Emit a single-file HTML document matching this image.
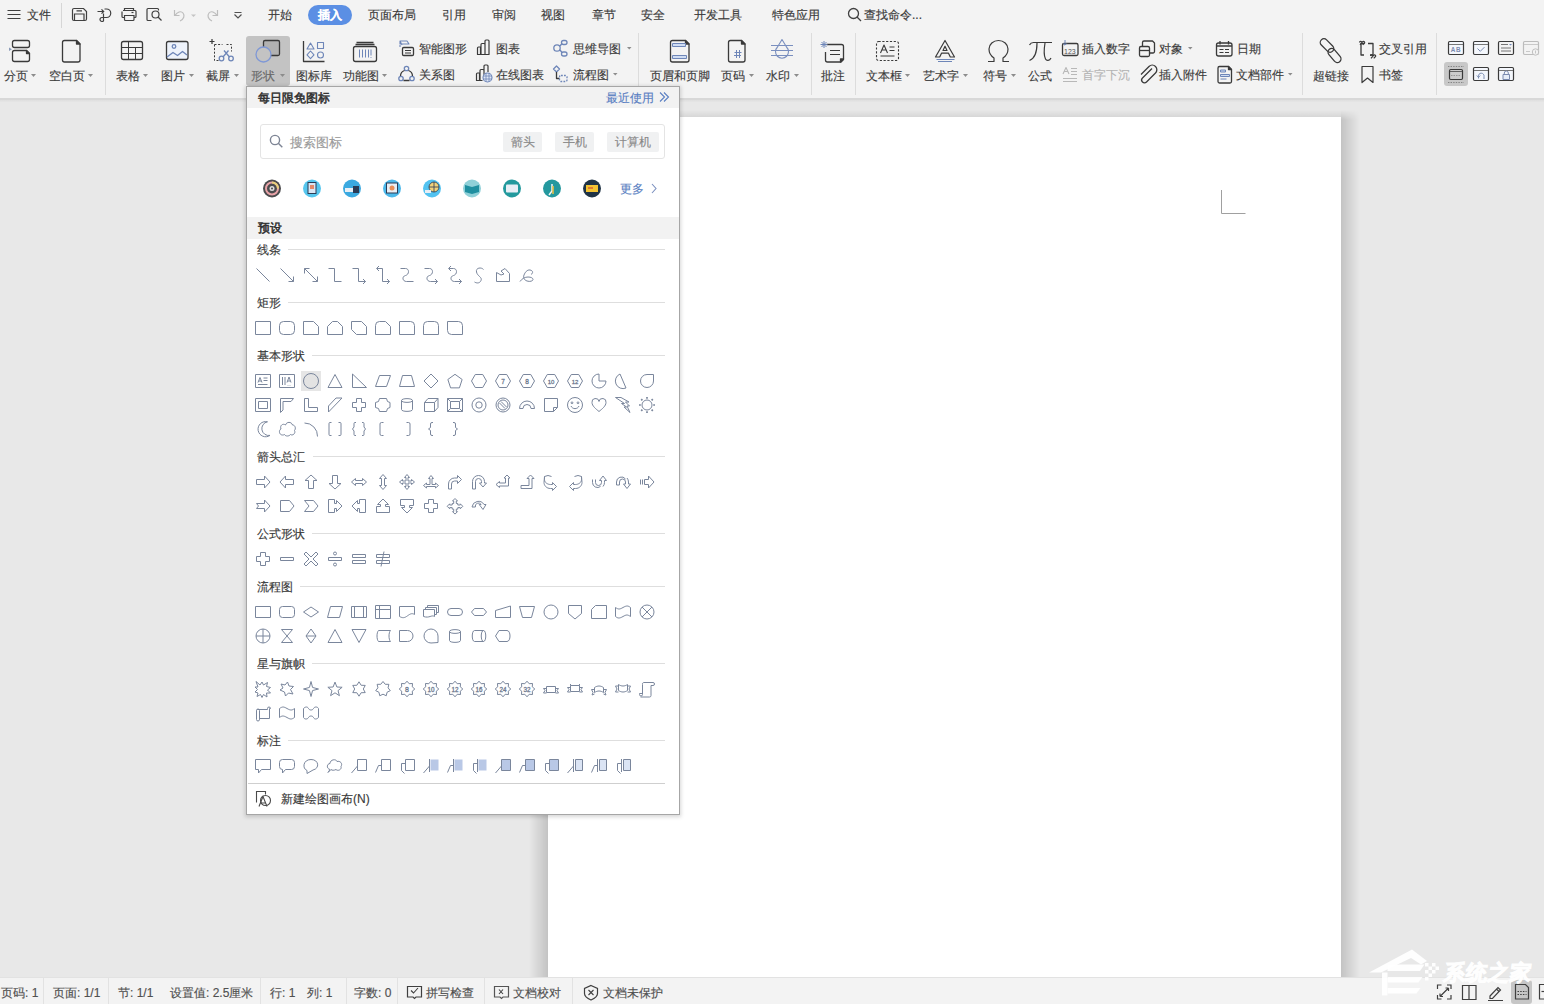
<!DOCTYPE html>
<html><head><meta charset="utf-8">
<style>
*{margin:0;padding:0;box-sizing:border-box}
html,body{width:1544px;height:1004px;overflow:hidden}
body{position:relative;background:#e8e8e8;font-family:"Liberation Sans",sans-serif;font-size:12px;color:#3c3c3c;-webkit-text-stroke:0.15px currentColor}
.a{position:absolute;white-space:nowrap;line-height:12px}
svg{position:absolute;overflow:visible}
#top{position:absolute;left:0;top:0;width:1544px;height:98px;background:#f3f3f3}
#topline{position:absolute;left:0;top:98px;width:1544px;height:2px;background:#d8d8d8}
.sep{position:absolute;width:1px;background:#dcdcdc}
.tab{position:absolute;top:9px;line-height:12px;font-size:12px;color:#3a3a3a;white-space:nowrap}
.lbl{position:absolute;top:70px;line-height:12px;color:#3c3c3c;white-space:nowrap}
.dd{position:absolute;width:0;height:0;border-left:2.5px solid transparent;border-right:2.5px solid transparent;border-top:3px solid #8a8a8a}
#page{position:absolute;left:548px;top:117px;width:793px;height:860px;background:#fff;}
#status{position:absolute;left:0;top:977px;width:1544px;height:27px;background:#f3f3f3;border-top:1px solid #e2e2e2}
.st{position:absolute;top:987px;line-height:12px;color:#505050;white-space:nowrap}
.ssep{position:absolute;top:978px;width:1px;height:26px;background:#e2e2e2}
#panel{position:absolute;left:246px;top:86px;width:434px;height:729px;background:#fff;border:1px solid #a6a6a6;box-shadow:0 1px 4px 1px rgba(0,0,0,0.16)}
.ph{position:absolute;line-height:12px;white-space:nowrap;color:#3a3a3a}
.hl{position:absolute;height:1px;background:#dedede}
</style></head><body>
<div id="top"></div>
<div id="topline"></div>
<!-- title/tab row -->
<svg style="left:0;top:0" width="260" height="32" fill="none" stroke="#404040" stroke-width="1.2">
<path d="M7.5 10.5h13M7.5 14.5h13M7.5 18.5h13"/>
<path d="M61.5 3v25" stroke="#d6d6d6" stroke-width="1"/>
<path d="M74 8.5h9.5l3 3v7.5a1.5 1.5 0 0 1 -1.5 1.5h-11a1.5 1.5 0 0 1 -1.5-1.5v-9a1.5 1.5 0 0 1 1.5-1.5z"/><path d="M74.5 20.5v-6.5h9.5v6.5M76.5 10.8h5.5"/>
<path d="M97.5 11.5h6M101.5 9.3l2.2 2.2-2.2 2.2M104.5 9h2a4.2 4.2 0 0 1 0 8.5h-4.5a2 2 0 1 0 1.5 3.3v-7.3"/>
<path d="M124.5 10.5v-2h9v2M123 10.5h12a1 1 0 0 1 1 1v5a1 1 0 0 1 -1 1h-1M124.5 17.5h-1.5a1 1 0 0 1 -1-1v-5M124.5 15.5h9.5v4a1 1 0 0 1 -1 1h-7.5a1 1 0 0 1 -1-1z"/><path d="M131.5 12.5h2"/>
<path d="M151.5 20.5h-3.5a1 1 0 0 1 -1-1v-10a1 1 0 0 1 1-1h9.5a1 1 0 0 1 1 1v1"/><circle cx="155.5" cy="14.5" r="3.5"/><path d="M158 17l3.5 3.5"/>
<path d="M174.5 10v5.5h5M175 15.5c2-3.5 6-5 8-2.5s1 6-3 8" stroke="#bdbdbd"/>
<path d="M191 14.5l2.5 2.5 2.5-2.5z" fill="#c4c4c4" stroke="none"/>
<path d="M217.5 10v5.5h-5M217 15.5c-2-3.5-6-5-8-2.5s-1 6 3 8" stroke="#bdbdbd"/>
<path d="M234.5 12.5h7M234.5 14.5l3.5 3.5 3.5-3.5" stroke="#505050"/>
</svg>
<div class="tab" style="left:27px">文件</div>
<div class="tab" style="left:268px">开始</div>
<div style="position:absolute;left:308px;top:5px;width:44px;height:20px;border-radius:10px;background:#5b8fe4"></div>
<div class="tab" style="left:318px;color:#fff;font-weight:bold">插入</div>
<div class="tab" style="left:368px">页面布局</div>
<div class="tab" style="left:442px">引用</div>
<div class="tab" style="left:492px">审阅</div>
<div class="tab" style="left:541px">视图</div>
<div class="tab" style="left:592px">章节</div>
<div class="tab" style="left:641px">安全</div>
<div class="tab" style="left:694px">开发工具</div>
<div class="tab" style="left:772px">特色应用</div>
<svg style="left:846px;top:6px" width="20" height="20" fill="none" stroke="#404040" stroke-width="1.3"><circle cx="7.5" cy="7.5" r="5"/><path d="M11 11l4 4"/></svg>
<div class="tab" style="left:864px">查找命令...</div>
<!-- ribbon -->
<div style="position:absolute;left:246px;top:36px;width:44px;height:50px;border-radius:3px;background:#c3c3c3"></div>
<div style="position:absolute;left:1444px;top:62px;width:24px;height:24px;border-radius:3px;background:#c8c8c8"></div>
<div class="sep" style="left:105px;top:33px;height:62px"></div>
<div class="sep" style="left:638px;top:33px;height:62px"></div>
<div class="sep" style="left:811px;top:33px;height:62px"></div>
<div class="sep" style="left:855px;top:33px;height:62px"></div>
<div class="sep" style="left:1302px;top:33px;height:62px"></div>
<div class="sep" style="left:1436px;top:33px;height:62px"></div>
<svg style="left:0;top:0" width="1544" height="98" fill="none" stroke="#3a3a3a" stroke-width="1.3" stroke-linejoin="round">
<!-- 分页 -->
<rect x="12.5" y="40.5" width="17" height="7" rx="2"/><path d="M14.5 50.5h12l3 3v6a2 2 0 0 1 -2 2h-13a2 2 0 0 1 -2-2v-7a2 2 0 0 1 2-2z"/><path d="M26.5 50.5l3 3h-3z" fill="#3a3a3a"/><path d="M9 47.5l3 1.8-3 1.8z" fill="#8a9ab8" stroke="none"/>
<!-- 空白页 -->
<path d="M64.5 40.5h12l3.5 3.5v16a2 2 0 0 1 -2 2h-13.5a2 2 0 0 1 -2-2v-17.5a2 2 0 0 1 2-2z"/><path d="M76.5 40.5l3.5 3.5h-3.5z" fill="#3a3a3a"/>
<!-- 表格 -->
<rect x="121.5" y="41.5" width="21" height="18" rx="2"/><path d="M121.5 47.5h21M121.5 53.5h21M128.5 41.5v18M135.5 47.5v12" stroke-width="1"/>
<!-- 图片 -->
<rect x="166.5" y="41.5" width="21.5" height="18" rx="2" fill="#eef3fb"/><circle cx="174" cy="46.5" r="1.8" stroke="#6e86b8"/><path d="M167 57l6-4.5 4.5 3 5-4 4.5 3.5" stroke="#6e86b8"/>
<!-- 截屏 -->
<path d="M214.5 44.5v16h4M226.5 44.5h5v7" stroke-dasharray="2 1.6" stroke-width="1"/><path d="M214.5 44.5h8" stroke-dasharray="2 1.6" stroke-width="1"/><path d="M209.5 41.5h5M212 39v5" stroke-width="1.2"/>
<circle cx="221.5" cy="58.5" r="2.3" stroke="#6e86b8"/><circle cx="231" cy="58.5" r="2.3" stroke="#6e86b8"/><path d="M223 57l5.5-6.5M229.5 57l-5.5-6.5" stroke="#6e86b8"/>
<!-- 形状 -->
<rect x="263.5" y="40.5" width="16" height="15" rx="1.5" fill="#b2b2b2"/><circle cx="263.5" cy="54.5" r="7.5" fill="#c3c3c3" stroke="#7f98d6" stroke-width="1.3"/>
<!-- 图标库 -->
<path d="M303.5 41v20.5h21" /><path d="M307 49l3.5-6 3.5 6z M317.5 42.5h6v6h-6z M310.5 51l3.5 3.8-3.5 3.8-3.5-3.8z" stroke="#6e86b8" stroke-width="1.1"/><circle cx="320.5" cy="55" r="3" stroke="#6e86b8" stroke-width="1.1"/>
<!-- 功能图 -->
<path d="M356.5 42.5h17M355.5 44.5h19"/><rect x="353.5" y="46.5" width="23" height="15" rx="2"/><path d="M359.5 49.5v8M362.5 49.5v8M365.5 49.5v8M368.5 49.5v8M371 49.5v6M371 57v0.8" stroke="#6e86b8" stroke-width="1"/>
<!-- 智能图形 -->
<path d="M400 41h7l2 3h-9zM400 41l2 4M400 47v-2" stroke="#6e86b8" stroke-width="1.1"/><rect x="402.5" y="47.5" width="11" height="8" rx="1.2"/><path d="M405 50.5h6M405 53h6" stroke-width="1"/>
<!-- 图表 -->
<path d="M477.5 54.5v-6.5a1 1 0 0 1 1-1h2v7.5zM481 54.5v-10a1 1 0 0 1 1-1h2a1 1 0 0 1 1 1v10zM485 54.5v-13.5a1 1 0 0 1 1-1h2a1 1 0 0 1 1 1v13.5z M477.5 54.5h11.5" stroke-width="1.2"/>
<!-- 思维导图 -->
<circle cx="557" cy="48" r="3.2" stroke="#6e86b8"/><rect x="561.5" y="40.5" width="5.5" height="4" rx="2" stroke="#6e86b8"/><rect x="561.5" y="52" width="5.5" height="4" rx="2" stroke="#6e86b8"/><path d="M560 46l2-2.5M560 50l2 2.5" stroke="#6e86b8"/>
<!-- 关系图 -->
<circle cx="406.5" cy="68.5" r="2.2" stroke="#6e86b8"/><circle cx="401" cy="78.5" r="2.2" stroke="#6e86b8"/><circle cx="412" cy="78.5" r="2.2" stroke="#6e86b8"/><path d="M404.5 70.5a6 6 0 0 0 -4 5.5M408.5 70.5a6 6 0 0 1 4 5.5M403.5 80.5h6" stroke="#3a3a3a"/>
<!-- 在线图表 -->
<path d="M476.5 80.5v-6.5a1 1 0 0 1 1-1h2v7.5zM480 80.5v-10a1 1 0 0 1 1-1h2a1 1 0 0 1 1 1v5M484 74.5v-8.5a1 1 0 0 1 1-1h2a1 1 0 0 1 1 1v6M476.5 80.5h6" stroke-width="1.2"/><circle cx="487.5" cy="77.5" r="4.5" fill="#dfe8f7" stroke="#6e86b8" stroke-width="1.1"/><path d="M483 76h9M483 79h9M486 73v9M489 73v9" stroke="#6e86b8" stroke-width="0.8"/>
<!-- 流程图 -->
<path d="M556.5 66l3 3-3 3-3-3z" stroke="#6e86b8"/><path d="M556.5 72v6.5h3" /><rect x="559.5" y="75.5" width="7.5" height="6" rx="1.5" stroke="#6e86b8" stroke-dasharray="1.8 1.2"/>
<!-- 页眉和页脚 -->
<path d="M672.5 40.5h13l3.5 3.5v16a2 2 0 0 1 -2 2h-14.5a2 2 0 0 1 -2-2v-17.5a2 2 0 0 1 2-2z"/><path d="M685.5 40.5l3.5 3.5h-3.5z" fill="#3a3a3a"/><rect x="672.5" y="43.5" width="13" height="3" fill="#cfdcf2" stroke="#6e86b8" stroke-width="1"/><rect x="672.5" y="55.5" width="14" height="3" fill="#cfdcf2" stroke="#6e86b8" stroke-width="1"/>
<!-- 页码 -->
<path d="M730.5 40.5h11l3.5 3.5v16a2 2 0 0 1 -2 2h-12.5a2 2 0 0 1 -2-2v-17.5a2 2 0 0 1 2-2z"/><path d="M741.5 40.5l3.5 3.5h-3.5z" fill="#3a3a3a"/><path d="M734.5 52.5h7M734 55.5h7M736.5 50v8M739.5 50v8" stroke="#6e86b8" stroke-width="1"/>
<!-- 水印 -->
<path d="M782 39.5l-4.5 7.5a6.5 6.5 0 1 0 9 0z" stroke="#7a8fbf" stroke-width="1.1"/><path d="M771 45.5h22M771 50.5h22M771 55.5h22" stroke="#7a8fbf" stroke-width="1.1"/>
<!-- 批注 -->
<path d="M826.5 44.5h15a2 2 0 0 1 2 2v13l-2.5 2.5h-13.5a2 2 0 0 1 -2-2v-8"/><path d="M840.5 62l3-3h-3z" fill="#3a3a3a"/><path d="M830 50.5h10M830 54.5h10" stroke-width="1"/><path d="M824 41v7M820.5 44.5h7M821.5 42l5 5M826.5 42l-5 5" stroke="#6e86b8" stroke-width="1"/>
<!-- 文本框 -->
<rect x="876.5" y="41.5" width="22" height="19" rx="2" stroke-dasharray="2.2 1.6" stroke-width="1.1"/><path d="M880.5 53l3.5-8 3.5 8M881.8 50h4.5M889.5 47h5M889.5 50.5h5M880.5 56h14" stroke-width="1.1"/>
<!-- 艺术字 -->
<path d="M945 40.5L935.5 57h4.2l1.8-3.8h7l1.8 3.8h4.2zM945 46.2l-2 4.3h4z" stroke-width="1.2"/><path d="M936.5 59.5h18M938 61.5h14" stroke="#6e86b8" stroke-width="1"/>
<!-- 符号 -->
<path d="M988 61.5h6v-3.5c-3-2-5-5-5-9a9.5 8.5 0 0 1 19 0c0 4-2 7-5 9v3.5h6" stroke-width="1.2"/>
<!-- 公式 -->
<path d="M1029.5 45c1-2 2-2.5 4-2.5h18.5M1037 43c0 8-1 15-7.5 17.5M1045 43c-1 6-1.5 12 0.5 16c1 2 4 2 5.5-1" stroke-width="1.2"/>
<!-- 插入数字 -->
<rect x="1062.5" y="43.5" width="15.5" height="12" rx="1.5"/><path d="M1065 40v5M1063.3 43.5l1.7 1.7 1.7-1.7" stroke="#6e86b8" stroke-width="1"/><text x="1064" y="53.5" font-size="7" fill="#555" stroke="none" font-family="Liberation Sans">123</text>
<!-- 对象 -->
<rect x="1139.5" y="46.5" width="10" height="10" rx="1.5"/><path d="M1142.5 46.5v-4a1.5 1.5 0 0 1 1.5-1.5h8.5l2 2v8.5a1.5 1.5 0 0 1 -1.5 1.5h-3.5"/><path d="M1139.5 50.5h10"/>
<!-- 日期 -->
<rect x="1216.5" y="43" width="15.5" height="13" rx="2"/><path d="M1220 41v3.5M1228.5 41v3.5M1216.5 46h15.5" /><path d="M1219.5 49.5h4M1225 49.5h4M1219.5 52.5h4M1225 52.5h4" stroke-width="1"/>
<!-- 首字下沉 -->
<path d="M1063 74l3-6.5 3 6.5M1064 71.5h4M1071 68.5h6M1071 71.5h6M1071 74.5h6M1063 78.5h14M1063 81.5h14" stroke="#b8b8b8" stroke-width="1.1"/>
<!-- 插入附件 -->
<path d="M1152 68.5l-9.5 9.5a2.8 2.8 0 0 0 4 4l9-9a4.5 4.5 0 0 0 -6.5-6.5l-8 8" stroke-width="1.3"/>
<!-- 文档部件 -->
<path d="M1219.5 66.5h9l3 3v12a1.5 1.5 0 0 1 -1.5 1.5h-10.5a1.5 1.5 0 0 1 -1.5-1.5v-13.5a1.5 1.5 0 0 1 1.5-1.5z"/><path d="M1228.5 66.5l3 3h-3z" fill="#3a3a3a"/><path d="M1220.5 70h5v2h-5zM1220.5 74.5h9v2h-9zM1220.5 79h6" stroke="#6e86b8" stroke-width="1" fill="#cfdcf2"/>
<!-- 超链接 -->
<rect x="1319" y="41.8" width="16" height="7.4" rx="3.7" transform="rotate(45 1327 45.5)" stroke-width="1.3"/><rect x="1326.5" y="51.8" width="16" height="7.4" rx="3.7" transform="rotate(50 1334.5 55.5)" stroke-width="1.3"/>
<!-- 交叉引用 -->
<path d="M1364.5 43.5h-3.5v11.5h3M1368 43.5h5v11.5h-3" stroke-width="1.3"/><path d="M1359.5 42.5a1.2 1.2 0 1 1 1.5 1.2l-1 1.2M1362.3 42.5a1.2 1.2 0 1 1 1.5 1.2l-1 1.2M1370.5 56a1.2 1.2 0 1 1 1.5 1.2l-1 1.2M1373.3 56a1.2 1.2 0 1 1 1.5 1.2l-1 1.2" stroke-width="1.2"/>
<!-- 书签 -->
<path d="M1362 66.5h11v16l-5.5-4.5-5.5 4.5z" stroke-width="1.2"/>
<!-- small icons right -->
<g stroke-width="1.2">
<rect x="1448.5" y="41.5" width="15" height="13" rx="1.2" fill="#f4f7fc"/><path d="M1449 44.5h14" stroke-width="0.9" stroke="#666"/><text x="1450.8" y="52.3" font-size="6.3" fill="#7a8bb0" stroke="none" font-family="Liberation Sans" font-weight="bold" letter-spacing="0.6">AB</text>
<rect x="1473.5" y="41.5" width="15" height="13" rx="1.2" fill="#f4f7fc"/><path d="M1474 44.5h14" stroke-width="0.9" stroke="#666"/><path d="M1477.5 48.5l2.8 2.8 4.2-4.2" stroke="#7a8bb0" stroke-width="1"/>
<rect x="1498.5" y="41.5" width="15" height="13" rx="1.2"/><path d="M1501 44.5h7M1501 48h10M1501 51h10" stroke-width="0.9" stroke="#666"/><path d="M1509 44l1.5 1.5 1.5-1.5z" fill="#6e86b8" stroke="none"/>
<rect x="1523.5" y="41.5" width="15" height="13" rx="1.2" stroke="#bcbcbc"/><path d="M1524 44.5h14M1526 51.5h4" stroke="#c4c4c4" stroke-width="0.9"/><circle cx="1535.5" cy="52" r="3.2" stroke="#c0c0c0" stroke-width="1" fill="#f3f3f3"/><path d="M1535.5 50.5v3" stroke="#c0c0c0" stroke-width="0.9"/>
<rect x="1449.5" y="69.5" width="13" height="10" rx="1.2" fill="#cbcbcb"/><path d="M1450 71.5h12" stroke-width="0.9" stroke="#555"/><path d="M1451 75.5h10" stroke-width="0.8" stroke="#888" stroke-dasharray="1.5 1"/><path d="M1448 66.5h16M1448 82.5h16" stroke="#7d7d7d" stroke-width="0.9" stroke-dasharray="1.4 1.2"/>
<rect x="1473.5" y="67.5" width="15" height="13" rx="1.2" fill="#f4f7fc"/><path d="M1474 70.5h14" stroke-width="0.9" stroke="#666"/><path d="M1478.5 78.5v-2a2.8 2.8 0 1 1 5.5 0v2.5M1476.8 75.5l1.7 1.8 1.7-1.8" stroke="#7a8bb0" stroke-width="1"/>
<rect x="1498.5" y="67.5" width="15" height="13" rx="1.2" fill="#f4f7fc"/><path d="M1499 70.5h14" stroke-width="0.9" stroke="#666"/><rect x="1503" y="74.5" width="6.5" height="5" stroke="#7a8bb0" stroke-width="1" fill="#e6edf8"/><path d="M1504.3 74.5v-1.5a2 2 0 0 1 4 0v1.5" stroke="#7a8bb0" stroke-width="1"/>
</g>
<!-- dropdown arrows -->
<g fill="#8c8c8c" stroke="none">
<path d="M31 74h5l-2.5 3z"/><path d="M88 74h5l-2.5 3z"/><path d="M143 74h5l-2.5 3z"/><path d="M189 74h5l-2.5 3z"/><path d="M234 74h5l-2.5 3z"/><path d="M280 74h5l-2.5 3z"/><path d="M382 74h5l-2.5 3z"/>
<path d="M627 47h4.5l-2.25 2.5z"/><path d="M613 73h4.5l-2.25 2.5z"/>
<path d="M749 74h5l-2.5 3z"/><path d="M794 74h5l-2.5 3z"/>
<path d="M905 74h5l-2.5 3z"/><path d="M963 74h5l-2.5 3z"/><path d="M1011 74h5l-2.5 3z"/>
<path d="M1188 47h4.5l-2.25 2.5z"/><path d="M1288 73h4.5l-2.25 2.5z"/>
</g>
</svg>
<div class="lbl" style="left:4px">分页</div>
<div class="lbl" style="left:49px">空白页</div>
<div class="lbl" style="left:116px">表格</div>
<div class="lbl" style="left:161px">图片</div>
<div class="lbl" style="left:206px">截屏</div>
<div class="lbl" style="left:251px;color:#6a6a6a">形状</div>
<div class="lbl" style="left:296px">图标库</div>
<div class="lbl" style="left:343px">功能图</div>
<div class="lbl" style="left:419px;top:43px">智能图形</div>
<div class="lbl" style="left:496px;top:43px">图表</div>
<div class="lbl" style="left:573px;top:43px">思维导图</div>
<div class="lbl" style="left:419px;top:69px">关系图</div>
<div class="lbl" style="left:496px;top:69px">在线图表</div>
<div class="lbl" style="left:573px;top:69px">流程图</div>
<div class="lbl" style="left:650px">页眉和页脚</div>
<div class="lbl" style="left:721px">页码</div>
<div class="lbl" style="left:766px">水印</div>
<div class="lbl" style="left:821px">批注</div>
<div class="lbl" style="left:866px">文本框</div>
<div class="lbl" style="left:923px">艺术字</div>
<div class="lbl" style="left:983px">符号</div>
<div class="lbl" style="left:1028px">公式</div>
<div class="lbl" style="left:1082px;top:43px">插入数字</div>
<div class="lbl" style="left:1159px;top:43px">对象</div>
<div class="lbl" style="left:1237px;top:43px">日期</div>
<div class="lbl" style="left:1082px;top:69px;color:#b4b4b4">首字下沉</div>
<div class="lbl" style="left:1159px;top:69px">插入附件</div>
<div class="lbl" style="left:1236px;top:69px">文档部件</div>
<div class="lbl" style="left:1313px">超链接</div>
<div class="lbl" style="left:1379px;top:43px">交叉引用</div>
<div class="lbl" style="left:1379px;top:69px">书签</div>

<div style="position:absolute;left:0;top:100px;width:1544px;height:2px;background:linear-gradient(#dfdfdf,#e6e6e6)"></div>
<div style="position:absolute;left:529px;top:110px;width:19px;height:867px;background:linear-gradient(to right,rgba(0,0,0,0),rgba(0,0,0,0.155));-webkit-mask-image:linear-gradient(transparent,#000 10px);mask-image:linear-gradient(transparent,#000 10px)"></div>
<div style="position:absolute;left:1341px;top:110px;width:19px;height:867px;background:linear-gradient(to left,rgba(0,0,0,0),rgba(0,0,0,0.155));-webkit-mask-image:linear-gradient(transparent,#000 10px);mask-image:linear-gradient(transparent,#000 10px)"></div>
<div style="position:absolute;left:548px;top:110px;width:793px;height:7px;background:linear-gradient(rgba(0,0,0,0),rgba(0,0,0,0.075))"></div>
<div id="page"></div>
<svg style="left:1220px;top:190px" width="30" height="30" fill="none" stroke="#a0a0a0" stroke-width="1"><path d="M1.5 0v23.5h24"/></svg>
<div id="status"></div>
<div class="ssep" style="left:43px"></div>
<div class="ssep" style="left:108px"></div>
<div class="ssep" style="left:260px"></div>
<div class="ssep" style="left:346px"></div>
<div class="ssep" style="left:397px"></div>
<div class="ssep" style="left:484px"></div>
<div class="ssep" style="left:572px"></div>
<div class="st" style="left:1px">页码: 1</div>
<div class="st" style="left:53px">页面: 1/1</div>
<div class="st" style="left:118px">节: 1/1</div>
<div class="st" style="left:170px">设置值: 2.5厘米</div>
<div class="st" style="left:270px">行: 1</div>
<div class="st" style="left:307px">列: 1</div>
<div class="st" style="left:354px">字数: 0</div>
<div class="st" style="left:426px">拼写检查</div>
<div class="st" style="left:513px">文档校对</div>
<div class="st" style="left:603px">文档未保护</div>
<div style="position:absolute;left:1511px;top:980px;width:21px;height:24px;border-radius:3px;background:#c6c6c6"></div>
<svg style="left:0;top:970px" width="1544" height="34" fill="none" stroke="#3f3f3f" stroke-width="1.2">
<path d="M407.5 16.5h14v10.5h-5.5l-1.5 1.5-1.5-1.5h-5.5z"/><path d="M411 20.5l2.5 2.5 4.5-5" stroke-width="1.1"/>
<path d="M494.5 16.5h14v10.5h-5.5l-1.5 1.5-1.5-1.5h-5.5z" stroke="#555"/><path d="M499 19.5l4 4.5M503 19.5l-4 4.5" stroke-width="1.1"/>
<path d="M591 15.5l6.5 3v5c0 3-3 5-6.5 6.5-3.5-1.5-6.5-3.5-6.5-6.5v-5z"/><path d="M588.5 20l5 5M593.5 20l-5 5" stroke-width="1.1"/>
<path d="M1437.5 19v-4h4M1451 19v-4h-4M1437.5 25v4h4M1451 25v4h-4M1440 26.5l8.5-8.5M1440 26.5h3M1440 26.5v-3M1448.5 18h-3M1448.5 18v3"/>
<path d="M1462.5 15.5h6.5v14h-6.5zM1469 15.5h7v14h-7z"/>
<path d="M1490 26l8-8.5 2.5 2.5-8 8.5h-2.5zM1496.5 19l2.5 2.5M1488 30.5h15"/>
<path d="M1515.5 14.5h10l3 3v11.5h-13z"/><path d="M1517.5 21.5h9M1517.5 24.5h9" stroke-dasharray="1.5 1.2" stroke-width="1"/>
<path d="M1539.5 14.5h10v14.5h-10z"/><path d="M1541.5 21.5h3"/>
</svg>
<!-- watermark -->
<svg style="left:1365px;top:945px" width="180" height="55">
<g fill="#fff" fill-opacity="0.93">
<path d="M4 27.5L47 4.5L62 16L56 19.5L46 13L16 27.5z"/>
<path d="M17 27.5h5.5v23h-5.5z"/>
<path d="M22.5 19.5h37l-4.5 6.5h-32.5z"/>
<path d="M22.5 32h35l-4 5.5h-31z"/>
<path d="M22.5 43h33l-4 5.5h-29z"/>
<path d="M60 18h3.5v3.5h-3.5zM63.5 21.5h3.5v3.5h-3.5zM67 18h3.5v3.5h-3.5zM60 25h3.5v3.5h-3.5zM67 25h3.5v3.5h-3.5zM63.5 28.5h3.5v3.5h-3.5zM60 32h3.5v3.5h-3.5zM70.5 21.5h3.5v3.5h-3.5z"/>
</g>
<text x="78" y="35.5" font-size="21.5" font-weight="bold" fill="#fff" fill-opacity="0.93" font-family="Liberation Sans" stroke="#fff" stroke-opacity="0.9" stroke-width="0.9" transform="skewX(-8) translate(5,0)">系统之家</text>
</svg>

<div id="panel"></div>
<div style="position:absolute;left:247px;top:87px;width:432px;height:21px;background:#f2f2f2"></div>
<div class="ph" style="left:258px;top:92px;-webkit-text-stroke:0.5px #2e2e2e;color:#2e2e2e">每日限免图标</div>
<div class="ph" style="left:606px;top:92px;color:#5a7fc2">最近使用</div>
<svg style="left:658px;top:91px" width="14" height="14" fill="none" stroke="#5a7fc2" stroke-width="1.1"><path d="M2 1.5l4.5 4.5-4.5 4.5M6 1.5l4.5 4.5-4.5 4.5"/></svg>
<div style="position:absolute;left:260px;top:124px;width:405px;height:35px;border:1px solid #e4e4e4;border-radius:3px;background:#fff"></div>
<svg style="left:268px;top:133px" width="18" height="18" fill="none" stroke="#7d8494" stroke-width="1.4"><circle cx="7" cy="7" r="4.6"/><path d="M10.3 10.3l4 4"/></svg>
<div class="ph" style="left:290px;top:137px;color:#9a9a9a;font-size:12.5px">搜索图标</div>
<div style="position:absolute;left:503px;top:132px;width:39px;height:20px;background:#f0f1f2;border-radius:2px"></div>
<div style="position:absolute;left:555px;top:132px;width:39px;height:20px;background:#f0f1f2;border-radius:2px"></div>
<div style="position:absolute;left:607px;top:132px;width:52px;height:20px;background:#f0f1f2;border-radius:2px"></div>
<div class="ph" style="left:511px;top:136px;color:#888">箭头</div>
<div class="ph" style="left:563px;top:136px;color:#888">手机</div>
<div class="ph" style="left:615px;top:136px;color:#888">计算机</div>
<svg style="left:0;top:0" width="700" height="220">
<g><circle cx="272" cy="188.5" r="9" fill="#4b4b4d"/><circle cx="272" cy="188.5" r="6" fill="none" stroke="#e9a3a8" stroke-width="2"/><path d="M272 182.5a6 6 0 0 1 6 6" stroke="#e8d27a" stroke-width="2" fill="none"/><circle cx="272" cy="188.5" r="2.5" fill="#ddd"/><circle cx="272" cy="188.5" r="1" fill="#4b4b4d"/></g>
<g><circle cx="312" cy="188.5" r="9" fill="#56c6ee"/><rect x="308" y="182.5" width="8" height="11" fill="#d8e6f5" stroke="#2b3b55" stroke-width="1"/><rect x="310" y="185" width="4" height="4" fill="#e48a6a"/></g>
<g><circle cx="352" cy="188.5" r="9" fill="#3ba9e0"/><rect x="345" y="188" width="9" height="4" fill="#e8eef5"/><rect x="353" y="186" width="6" height="7" fill="#2b3b55"/></g>
<g><circle cx="392" cy="188.5" r="9" fill="#4cb8ea"/><rect x="386.5" y="183" width="11" height="10" fill="#e8eef5" stroke="#2b3b55" stroke-width="1"/><circle cx="392" cy="188" r="2.5" fill="#e88f5a"/></g>
<g><circle cx="432" cy="188.5" r="9" fill="#52c2f0"/><circle cx="434" cy="187" r="5" fill="#f2d27a" stroke="#2b3b55" stroke-width="0.8"/><path d="M429 187h10M434 182v10" stroke="#2b3b55" stroke-width="0.8"/><rect x="425" y="190" width="6" height="3" fill="#e8eef5"/></g>
<g><circle cx="472" cy="188.5" r="9" fill="#8fd0d8"/><path d="M465 185l7 2 7-2v7l-7 2-7-2z" fill="#1f8fa0"/></g>
<g><circle cx="512" cy="188.5" r="9" fill="#23999d"/><rect x="506" y="184.5" width="12" height="8" rx="1" fill="#e8eef5"/></g>
<g><circle cx="552" cy="188.5" r="9" fill="#24989e"/><path d="M549 195l3-4v-7" stroke="#f4f4f4" stroke-width="1.5" fill="none"/><path d="M553 186v8" stroke="#f0c040" stroke-width="1.5"/></g>
<g><circle cx="592" cy="188.5" r="9" fill="#1f3346"/><rect x="586" y="185" width="12" height="7" fill="#f2c233"/><rect x="588" y="187" width="5" height="2" fill="#e07a30"/></g>
<path d="M652 184l4 4.5-4 4.5" fill="none" stroke="#7a8fbf" stroke-width="1.1"/>
</svg>
<div class="ph" style="left:620px;top:183px;color:#5a7fc2">更多</div>
<div style="position:absolute;left:247px;top:217px;width:432px;height:22px;background:#f2f2f2"></div>
<div class="ph" style="left:258px;top:222px;-webkit-text-stroke:0.5px #2e2e2e;color:#2e2e2e">预设</div>
<div class="ph" style="left:257px;top:244px">线条</div><div class="hl" style="left:288px;top:249px;width:377px"></div>
<div class="ph" style="left:257px;top:297px">矩形</div><div class="hl" style="left:288px;top:302px;width:377px"></div>
<div class="ph" style="left:257px;top:350px">基本形状</div><div class="hl" style="left:312px;top:355px;width:353px"></div>
<div class="ph" style="left:257px;top:451px">箭头总汇</div><div class="hl" style="left:313px;top:456px;width:352px"></div>
<div class="ph" style="left:257px;top:528px">公式形状</div><div class="hl" style="left:312px;top:533px;width:353px"></div>
<div class="ph" style="left:257px;top:581px">流程图</div><div class="hl" style="left:300px;top:586px;width:365px"></div>
<div class="ph" style="left:257px;top:658px">星与旗帜</div><div class="hl" style="left:312px;top:663px;width:353px"></div>
<div class="ph" style="left:257px;top:735px">标注</div><div class="hl" style="left:288px;top:740px;width:377px"></div>
<div class="hl" style="left:248px;top:783px;width:417px;background:#cfcfcf"></div>
<div class="ph" style="left:281px;top:793px">新建绘图画布(N)</div>
<svg style="left:255px;top:790px" width="20" height="20" fill="none" stroke="#4a4a4a" stroke-width="1.1"><path d="M1.5 12.5v-11h9v3"/><circle cx="10.5" cy="10.5" r="5"/><path d="M4 16.5l4-10 4 10M5.5 13h5"/></svg>
<!--SHAPES-->
<svg style="left:0;top:0" width="700" height="800" fill="none" stroke="#7a869c" stroke-width="1" stroke-linejoin="round">
<rect x="301" y="371" width="20" height="20" fill="#e6e6e6" stroke="none"/>
<g transform="translate(255,267)"><path d="M1.5 1.5l13 13"/></g>
<g transform="translate(279,267)"><path d="M1.5 1.5l13 13M9.5 14.5h5v-5"/></g>
<g transform="translate(303,267)"><path d="M1.5 1.5l13 13M9.5 14.5h5v-5M6.5 1.5h-5v5"/></g>
<g transform="translate(327,267)"><path d="M1.5 1.5h6v13h7"/></g>
<g transform="translate(351,267)"><path d="M1.5 1.5h6v13h7M12 12l2.5 2.5-2.5 2.5"/></g>
<g transform="translate(375,267)"><path d="M2 1.5h5.5v13h7M12 12l2.5 2.5-2.5 2.5M4 -1l-2.5 2.5 2.5 2.5"/></g>
<g transform="translate(399,267)"><path d="M1.5 1.5h5c4 0 4 6 0 7s-3 6 1 6h7"/></g>
<g transform="translate(423,267)"><path d="M1.5 1.5h5c4 0 4 6 0 7s-3 6 1 6h7M12 12l2.5 2.5-2.5 2.5"/></g>
<g transform="translate(447,267)"><path d="M2 1.5h4.5c4 0 4 6 0 7s-3 6 1 6h7M12 12l2.5 2.5-2.5 2.5M4 -1l-2.5 2.5 2.5 2.5"/></g>
<g transform="translate(471,267)"><path d="M12.5 2.5c-2-2.5-8-2-7 2.5s6 5 4.5 8.5-5 2.5-6.5 1.5"/></g>
<g transform="translate(495,267)"><path d="M1.5 5.5v9h13v-8l-4.5-5-4 2.5 3 3-3 1z"/></g>
<g transform="translate(519,267)"><path d="M1 14.5c2-3 5-4.5 8-4.5s5 1 5 2.5-3 2.5-6 1.5-4-3.5-3-6 3-5.5 6-5 3.5 3 1 4.5"/></g>
<g transform="translate(255,320)"><rect x="0.5" y="1.5" width="15" height="13"/></g>
<g transform="translate(279,320)"><rect x="0.5" y="1.5" width="15" height="13" rx="4"/></g>
<g transform="translate(303,320)"><path d="M0.5 1.5h10l5 5v8h-15z"/></g>
<g transform="translate(327,320)"><path d="M0.5 14.5v-8l5-5h5l5 5v8z"/></g>
<g transform="translate(351,320)"><path d="M0.5 1.5h10l5 5v8h-10l-5-5z"/></g>
<g transform="translate(375,320)"><path d="M0.5 14.5v-9a4 4 0 0 1 4-4h6l5 5v8z"/></g>
<g transform="translate(399,320)"><path d="M0.5 1.5h11a4 4 0 0 1 4 4v9h-15z"/></g>
<g transform="translate(423,320)"><path d="M0.5 14.5v-9a4 4 0 0 1 4-4h7a4 4 0 0 1 4 4v9z"/></g>
<g transform="translate(447,320)"><path d="M0.5 1.5h11a4 4 0 0 1 4 4v9h-11a4 4 0 0 1 -4-4z"/></g>
<g transform="translate(255,373)"><rect x="0.5" y="1.5" width="15" height="13"/><path d="M3 9.5l2-5 2 5M3.8 8h2.4M8.5 5h4M8.5 7.5h4M3 11.5h9.5"/></g>
<g transform="translate(279,373)"><rect x="0.5" y="1.5" width="15" height="13"/><path d="M3.5 4v8M6 4v8M8 9.5l2-5.5 2 5.5M8.8 8h2.4M9 12v0.5M11 12v0.5"/></g>
<g transform="translate(303,373)"><circle cx="8" cy="8" r="7.5" fill="#e3e3e3"/></g>
<g transform="translate(327,373)"><path d="M8 1.5l7 13h-14z"/></g>
<g transform="translate(351,373)"><path d="M1.5 1l14 13.5h-14z"/></g>
<g transform="translate(375,373)"><path d="M4.5 2.5h11l-4 11h-11z"/></g>
<g transform="translate(399,373)"><path d="M3.5 2.5h9l3 11h-15z"/></g>
<g transform="translate(423,373)"><path d="M8 1l7 7-7 7-7-7z"/></g>
<g transform="translate(447,373)"><path d="M8.00 1.30L15.13 6.48L12.41 14.87L3.59 14.87L0.87 6.48z"/></g>
<g transform="translate(471,373)"><path d="M15.50 8.00L11.75 14.50L4.25 14.50L0.50 8.00L4.25 1.50L11.75 1.50z"/></g>
<g transform="translate(495,373)"><path d="M15.50 8.00L11.75 14.50L4.25 14.50L0.50 8.00L4.25 1.50L11.75 1.50z"/><text x="8" y="10.5" font-size="6.5" text-anchor="middle" fill="#6e7a90" stroke="#6e7a90" stroke-width="0.3" font-family="Liberation Sans">7</text></g>
<g transform="translate(519,373)"><path d="M15.50 8.00L11.75 14.50L4.25 14.50L0.50 8.00L4.25 1.50L11.75 1.50z"/><text x="8" y="10.5" font-size="6.5" text-anchor="middle" fill="#6e7a90" stroke="#6e7a90" stroke-width="0.3" font-family="Liberation Sans">8</text></g>
<g transform="translate(543,373)"><path d="M15.50 8.00L11.75 14.50L4.25 14.50L0.50 8.00L4.25 1.50L11.75 1.50z"/><text x="8" y="10.5" font-size="6" text-anchor="middle" fill="#6e7a90" stroke="#6e7a90" stroke-width="0.3" font-family="Liberation Sans">10</text></g>
<g transform="translate(567,373)"><path d="M15.50 8.00L11.75 14.50L4.25 14.50L0.50 8.00L4.25 1.50L11.75 1.50z"/><text x="8" y="10.5" font-size="6" text-anchor="middle" fill="#6e7a90" stroke="#6e7a90" stroke-width="0.3" font-family="Liberation Sans">12</text></g>
<g transform="translate(591,373)"><path d="M8 1a7 7 0 1 0 7 7h-7z"/></g>
<g transform="translate(615,373)"><path d="M5 1a7 7 0 0 0 6 14z"/></g>
<g transform="translate(639,373)"><path d="M8 1.5h6.5v6.5a6.5 6.5 0 1 1 -6.5-6.5z"/></g>
<g transform="translate(255,397)"><rect x="0.5" y="1.5" width="15" height="13"/><rect x="3.5" y="4.5" width="9" height="7"/></g>
<g transform="translate(279,397)"><path d="M1.5 15.5v-14h13l-2.5 3h-8v8.5z"/></g>
<g transform="translate(303,397)"><path d="M1.5 1.5h4v9h9v4h-13z"/></g>
<g transform="translate(327,397)"><path d="M1.5 15v-6l7.5-8h6z"/></g>
<g transform="translate(351,397)"><path d="M5.5 1.5h5v4h4v5h-4v4h-5v-4h-4v-5h4z"/></g>
<g transform="translate(375,397)"><path d="M4.5 1.5h7l1 3 2.5 1v5l-2.5 1-1 3h-7l-1-3-3-1v-5l3-1z"/></g>
<g transform="translate(399,397)"><path d="M2.5 3.5v9c0 2.5 11 2.5 11 0v-9M2.5 3.5c0-2.5 11-2.5 11 0s-11 2.5-11 0"/></g>
<g transform="translate(423,397)"><path d="M1.5 5.5h10v9h-10zM1.5 5.5l3.5-4h10l-3.5 4M11.5 14.5l3.5-4v-9"/></g>
<g transform="translate(447,397)"><rect x="0.5" y="1.5" width="15" height="13"/><rect x="3.5" y="4.5" width="9" height="7"/><path d="M0.5 1.5l3 3M15.5 1.5l-3 3M0.5 14.5l3-3M15.5 14.5l-3-3"/></g>
<g transform="translate(471,397)"><circle cx="8" cy="8" r="7"/><circle cx="8" cy="8" r="3.2"/></g>
<g transform="translate(495,397)"><circle cx="8" cy="8" r="7"/><circle cx="8" cy="8" r="5"/><path d="M4.5 6l5.5 5.5M6 4.5l5.5 5.5"/></g>
<g transform="translate(519,397)"><path d="M0.5 11.5a7.5 7.5 0 0 1 15 0h-3.5a4 4 0 0 0 -8 0z"/></g>
<g transform="translate(543,397)"><path d="M1.5 1.5h13v9l-4 4h-9zM10.5 14.5v-4h4"/></g>
<g transform="translate(567,397)"><circle cx="8" cy="8" r="7.5"/><circle cx="5" cy="5.8" r="0.9"/><circle cx="11" cy="5.8" r="0.9"/><path d="M4 9c1.5 3.5 6.5 3.5 8 0"/></g>
<g transform="translate(591,397)"><path d="M8 14.5c-3-2.5-7-5.5-7-9a3.5 3.5 0 0 1 7-1a3.5 3.5 0 0 1 7 1c0 3.5-4 6.5-7 9z"/></g>
<g transform="translate(615,397)"><path d="M0.5 0.5h5.5l8 4.5h-3.5l4 4h-2.5l3 6.5-6-5.5h2.5l-5-3.5h3z"/></g>
<g transform="translate(639,397)"><circle cx="8" cy="8" r="5"/><path d="M8 0v1.8M8 14.2v1.8M0 8h1.8M14.2 8h1.8M2.2 2.2l1.2 1.2M12.6 12.6l1.2 1.2M2.2 13.8l1.2-1.2M12.6 3.4l1.2-1.2" stroke-width="1.7"/></g>
<g transform="translate(255,421)"><path d="M12.5 0.8a7.6 7.6 0 1 0 2.5 13.6a6.2 6.2 0 0 1 -2.5-13.6z"/></g>
<g transform="translate(279,421)"><path d="M3.5 14c-3.5 0-4-5-1.5-6-1.5-3.5 2-6 4.5-4 1-3.5 6-3.5 7 0 3 0 3.5 4 2 5.5 1.5 3-2 5.5-4 4-1.5 2-5 2-6 0-0.7 0.5-1.5 0.5-2 0.5z"/></g>
<g transform="translate(303,421)"><path d="M1.5 2a13 13 0 0 1 13 13.5"/></g>
<g transform="translate(327,421)"><path d="M4.5 1.5h-1.5a1 1 0 0 0 -1 1v11a1 1 0 0 0 1 1h1.5M11.5 1.5h1.5a1 1 0 0 1 1 1v11a1 1 0 0 1 -1 1h-1.5"/></g>
<g transform="translate(351,421)"><path d="M5 1.5h-1a1 1 0 0 0 -1 1v3.5l-1.5 2 1.5 2v3.5a1 1 0 0 0 1 1h1M11 1.5h1a1 1 0 0 1 1 1v3.5l1.5 2-1.5 2v3.5a1 1 0 0 1 -1 1h-1"/></g>
<g transform="translate(375,421)"><path d="M8.5 1.5h-2a1.5 1.5 0 0 0 -1.5 1.5v10a1.5 1.5 0 0 0 1.5 1.5h2"/></g>
<g transform="translate(399,421)"><path d="M7.5 1.5h2a1.5 1.5 0 0 1 1.5 1.5v10a1.5 1.5 0 0 1 -1.5 1.5h-2"/></g>
<g transform="translate(423,421)"><path d="M10 1.5h-1a1.5 1.5 0 0 0 -1.5 1.5v3.5l-2 1.5 2 1.5v3.5a1.5 1.5 0 0 0 1.5 1.5h1"/></g>
<g transform="translate(447,421)"><path d="M6 1.5h1a1.5 1.5 0 0 1 1.5 1.5v3.5l2 1.5-2 1.5v3.5a1.5 1.5 0 0 1 -1.5 1.5h-1"/></g>
<g transform="translate(255,474)"><path d="M1.5 5.5h8v-3.5l5.5 6-5.5 6v-3.5h-8z"/></g>
<g transform="translate(279,474)"><path d="M14.5 5.5h-8v-3.5l-5.5 6 5.5 6v-3.5h8z"/></g>
<g transform="translate(303,474)"><path d="M5.5 14.5v-8h-3.5l6-5.5 6 5.5h-3.5v8z"/></g>
<g transform="translate(327,474)"><path d="M5.5 1.5v8h-3.5l6 5.5 6-5.5h-3.5v-8z"/></g>
<g transform="translate(351,474)"><path d="M0.5 8l4-3.5v2h7v-2l4 3.5-4 3.5v-2h-7v2z"/></g>
<g transform="translate(375,474)"><path d="M8 0.5l3.5 4h-2v7h2l-3.5 4-3.5-4h2v-7h-2z"/></g>
<g transform="translate(399,474)"><path d="M8 0.5l2.5 3h-1.5v3.5h3.5v-1.5l3 2.5-3 2.5v-1.5h-3.5v3.5h1.5l-2.5 3-2.5-3h1.5v-3.5h-3.5v1.5l-3-2.5 3-2.5v1.5h3.5v-3.5h-1.5z"/></g>
<g transform="translate(423,474)"><path d="M8 1.5l2.5 3h-1.5v6h3.5v-1.5l3 2.5-3 2.5v-1.5h-9v1.5l-3-2.5 3-2.5v1.5h3.5v-6h-1.5z"/></g>
<g transform="translate(447,474)"><path d="M1.5 15v-5a6 6 0 0 1 6-6h3v-2.5l4 4-4 4v-2.5h-3a3 3 0 0 0 -3 3v5z"/></g>
<g transform="translate(471,474)"><path d="M1.5 15v-7.5a6 6 0 0 1 12 0v1.5h2l-3.5 4-3.5-4h2v-1.5a3 3 0 0 0 -6 0v7.5z"/></g>
<g transform="translate(495,474)"><path d="M12 1l3 3h-1.5v8h-9v1.5l-3.5-3 3.5-3v1.5h6v-5h-1.5z"/></g>
<g transform="translate(519,474)"><path d="M11.5 1l3.5 3.5h-2v10h-11v-3h8v-7h-2z"/></g>
<g transform="translate(543,474)"><path d="M1.5 2.5a7 7 0 0 1 7 0M1.5 2.5v3c0 3 3 5 6 5h2v-2l4 4-4 4v-2h-2c-4 0-6.5-3-6.5-6z"/></g>
<g transform="translate(567,474)"><path d="M14.5 2.5a7 7 0 0 0 -7 0M14.5 2.5v3c0 3-3 5-6 5h-2v-2l-4 4 4 4v-2h2c4 0 6.5-3 6.5-6z"/></g>
<g transform="translate(591,474)"><path d="M1.5 5.5v3a5 5 0 0 0 8 4M4.5 5.5v3a3 3 0 0 0 6 0v-2h-2l3.5-4.5 3.5 4.5h-2v2a6 6 0 0 1 -1.5 4"/></g>
<g transform="translate(615,474)"><path d="M1.5 11v-3a5 5 0 0 1 9-3M4.5 11v-3a3 3 0 0 1 6 0v2h-2l3.5 4.5 3.5-4.5h-2v-2a6 6 0 0 0 -1.5-4M1.5 11h3"/></g>
<g transform="translate(639,474)"><path d="M5.5 5.5h4v-3.5l5.5 6-5.5 6v-3.5h-4zM1.5 5.5v5M3.5 5.5v5"/></g>
<g transform="translate(255,498)"><path d="M1.5 5.5h8v-3.5l5.5 6-5.5 6v-3.5h-8l2-2.5z"/></g>
<g transform="translate(279,498)"><path d="M1.5 2.5h9l4.5 5.5-4.5 5.5h-9z"/></g>
<g transform="translate(303,498)"><path d="M1.5 2.5h9l4.5 5.5-4.5 5.5h-9l4.5-5.5z"/></g>
<g transform="translate(327,498)"><path d="M1.5 1.5h6v4h2v-3l5.5 5.5-5.5 5.5v-3h-2v4h-6z"/></g>
<g transform="translate(351,498)"><path d="M14.5 1.5h-6v4h-2v-3l-5.5 5.5 5.5 5.5v-3h2v4h6z"/></g>
<g transform="translate(375,498)"><path d="M1.5 14.5v-6h4v-2h-3l5.5-5.5 5.5 5.5h-3v2h4v6z"/></g>
<g transform="translate(399,498)"><path d="M1.5 1.5v6h4v2h-3l5.5 5.5 5.5-5.5h-3v-2h4v-6z"/></g>
<g transform="translate(423,498)"><path d="M5.5 1.5h5v4h4v5h-4v4h-5v-4h-4v-5h4z"/></g>
<g transform="translate(447,498)"><path d="M8 0.5l2.5 2.5h-1.2v2.5h1.5v1.5h2.5v-1.2l2.5 2.5-2.5 2.5v-1.2h-2.5v1.5h-1.5v2.5h1.2l-2.5 2.5-2.5-2.5h1.2v-2.5h-1.5v-1.5h-2.5v1.2l-2.5-2.5 2.5-2.5v1.2h2.5v-1.5h1.5v-2.5h-1.2z"/></g>
<g transform="translate(471,498)"><path d="M1 9a6.5 6.5 0 0 1 12-2.5h2l-3 5-3.8-5h2a3.2 3.2 0 0 0 -5.8 2.5z"/></g>
<g transform="translate(255,551)"><path d="M5.5 1.5h5v4h4v5h-4v4h-5v-4h-4v-5h4z"/></g>
<g transform="translate(279,551)"><path d="M1.5 6.5h13v3h-13z"/></g>
<g transform="translate(303,551)"><path d="M3 1l5 5 5-5 2 2-5 5 5 5-2 2-5-5-5 5-2-2 5-5-5-5z"/></g>
<g transform="translate(327,551)"><path d="M1.5 6.5h13v3h-13z"/><circle cx="8" cy="2.5" r="1.5"/><circle cx="8" cy="13.5" r="1.5"/></g>
<g transform="translate(351,551)"><path d="M1.5 3.5h13v3h-13zM1.5 9.5h13v3h-13z"/></g>
<g transform="translate(375,551)"><path d="M1.5 3.5h13v3h-13zM1.5 9.5h13v3h-13zM9 0.5l-3 15"/></g>
<g transform="translate(255,604)"><rect x="0.5" y="2.5" width="15" height="11"/></g>
<g transform="translate(279,604)"><rect x="0.5" y="2.5" width="15" height="11" rx="3"/></g>
<g transform="translate(303,604)"><path d="M8 3l7.5 5-7.5 5-7.5-5z"/></g>
<g transform="translate(327,604)"><path d="M3.5 2.5h12l-3 11h-12z"/></g>
<g transform="translate(351,604)"><rect x="0.5" y="2.5" width="15" height="11"/><path d="M3.5 2.5v11M12.5 2.5v11"/></g>
<g transform="translate(375,604)"><rect x="0.5" y="1.5" width="15" height="13"/><path d="M0.5 5.5h15M4.5 1.5v13"/></g>
<g transform="translate(399,604)"><path d="M0.5 2.5h15v8c-3-2-5 0-8 2s-5 1-7 0z"/></g>
<g transform="translate(423,604)"><path d="M0.5 5.5h11v7c-3-2-5 2-11 0zM2.5 5.5v-2h11v7h-2M4.5 3.5v-2h11v7h-2"/></g>
<g transform="translate(447,604)"><rect x="0.5" y="4.5" width="15" height="7" rx="3.5"/></g>
<g transform="translate(471,604)"><path d="M0.5 8l3-3.5h9l3 3.5-3 3.5h-9z"/></g>
<g transform="translate(495,604)"><path d="M0.5 6.5l15-4.5v11.5h-15z"/></g>
<g transform="translate(519,604)"><path d="M0.5 2.5h15l-3 11h-9z"/></g>
<g transform="translate(543,604)"><circle cx="8" cy="8" r="7"/></g>
<g transform="translate(567,604)"><path d="M1.5 1.5h13v8l-6.5 5.5-6.5-5.5z"/></g>
<g transform="translate(591,604)"><path d="M4.5 1.5h11v13h-15v-9z"/></g>
<g transform="translate(615,604)"><path d="M0.5 3.5c3 2 4 2 7.5 0s5-2 7.5 0v9c-3-2-4-2-7.5 0s-5 2-7.5 0z"/></g>
<g transform="translate(639,604)"><circle cx="8" cy="8" r="7"/><path d="M3 3l10 10M13 3l-10 10"/></g>
<g transform="translate(255,628)"><circle cx="8" cy="8" r="7"/><path d="M1 8h14M8 1v14"/></g>
<g transform="translate(279,628)"><path d="M2.5 1.5h11l-11 13h11z"/></g>
<g transform="translate(303,628)"><path d="M8 1l5 7-5 7-5-7zM3 8h10"/></g>
<g transform="translate(327,628)"><path d="M8 1.5l7 13h-14z"/></g>
<g transform="translate(351,628)"><path d="M1 1.5h14l-7 13z"/></g>
<g transform="translate(375,628)"><path d="M3.5 2.5h12c-2 2-2 9 0 11h-12c-2-2-2-9 0-11z"/></g>
<g transform="translate(399,628)"><path d="M0.5 2.5h8a5.5 5.5 0 0 1 0 11h-8z"/></g>
<g transform="translate(423,628)"><path d="M8 15a7 7 0 1 1 7-7v6.5z"/></g>
<g transform="translate(447,628)"><path d="M2.5 3.5v9c0 2.5 11 2.5 11 0v-9M2.5 3.5c0-2.5 11-2.5 11 0s-11 2.5-11 0"/></g>
<g transform="translate(471,628)"><path d="M3.5 2.5h9c3 0 3 11 0 11h-9c-3 0-3-11 0-11zM12.5 2.5c-3 0-3 11 0 11"/></g>
<g transform="translate(495,628)"><path d="M0.5 8l3.5-5.5h8c4 0 4 11 0 11h-8z"/></g>
<g transform="translate(255,681)"><path d="M1 0.5l4 3.5 2-3 1.5 3 4-2.5-1 4 4 1-3 2.5 3 3-4 0 0.5 4-3.5-2.5-1.5 3-1.5-3-3.5 2 1-3.5-3-1 2.5-2.5-2.5-2.5 3 0z"/></g>
<g transform="translate(279,681)"><path d="M2 3l4 1 2.5-3 1.5 4 4.5 0.5-3 3 2.5 4.5-4.5-1-3 3-1-4-4.5-2 3-2z"/></g>
<g transform="translate(303,681)"><path d="M8.00 0.50L9.56 6.44L15.50 8.00L9.56 9.56L8.00 15.50L6.44 9.56L0.50 8.00L6.44 6.44z"/></g>
<g transform="translate(327,681)"><path d="M8.00 1.10L9.88 6.01L15.13 6.28L11.04 9.59L12.41 14.67L8.00 11.80L3.59 14.67L4.96 9.59L0.87 6.28L6.12 6.01z"/></g>
<g transform="translate(351,681)"><path d="M8.00 0.80L10.15 4.28L14.24 4.40L12.30 8.00L14.24 11.60L10.15 11.72L8.00 15.20L5.85 11.72L1.76 11.60L3.70 8.00L1.76 4.40L5.85 4.28z"/></g>
<g transform="translate(375,681)"><path d="M8.00 0.50L10.26 3.31L13.86 3.32L13.07 6.84L15.31 9.67L12.07 11.24L11.25 14.76L8.00 13.20L4.75 14.76L3.93 11.24L0.69 9.67L2.93 6.84L2.14 3.32L5.74 3.31z"/></g>
<g transform="translate(399,681)"><path d="M8.00 0.20L10.18 2.73L13.52 2.48L13.27 5.82L15.80 8.00L13.27 10.18L13.52 13.52L10.18 13.27L8.00 15.80L5.82 13.27L2.48 13.52L2.73 10.18L0.20 8.00L2.73 5.82L2.48 2.48L5.82 2.73z"/><text x="8" y="10.5" font-size="7" text-anchor="middle" fill="#6e7a90" stroke="#6e7a90" stroke-width="0.3" font-family="Liberation Sans">8</text></g>
<g transform="translate(423,681)"><path d="M8.00 0.20L10.18 2.73L13.52 2.48L13.27 5.82L15.80 8.00L13.27 10.18L13.52 13.52L10.18 13.27L8.00 15.80L5.82 13.27L2.48 13.52L2.73 10.18L0.20 8.00L2.73 5.82L2.48 2.48L5.82 2.73z"/><text x="8" y="10.5" font-size="6.3" text-anchor="middle" fill="#6e7a90" stroke="#6e7a90" stroke-width="0.3" font-family="Liberation Sans">10</text></g>
<g transform="translate(447,681)"><path d="M8.00 0.20L10.18 2.73L13.52 2.48L13.27 5.82L15.80 8.00L13.27 10.18L13.52 13.52L10.18 13.27L8.00 15.80L5.82 13.27L2.48 13.52L2.73 10.18L0.20 8.00L2.73 5.82L2.48 2.48L5.82 2.73z"/><text x="8" y="10.5" font-size="6.3" text-anchor="middle" fill="#6e7a90" stroke="#6e7a90" stroke-width="0.3" font-family="Liberation Sans">12</text></g>
<g transform="translate(471,681)"><path d="M8.00 0.20L10.18 2.73L13.52 2.48L13.27 5.82L15.80 8.00L13.27 10.18L13.52 13.52L10.18 13.27L8.00 15.80L5.82 13.27L2.48 13.52L2.73 10.18L0.20 8.00L2.73 5.82L2.48 2.48L5.82 2.73z"/><text x="8" y="10.5" font-size="6.3" text-anchor="middle" fill="#6e7a90" stroke="#6e7a90" stroke-width="0.3" font-family="Liberation Sans">16</text></g>
<g transform="translate(495,681)"><path d="M8.00 0.20L10.18 2.73L13.52 2.48L13.27 5.82L15.80 8.00L13.27 10.18L13.52 13.52L10.18 13.27L8.00 15.80L5.82 13.27L2.48 13.52L2.73 10.18L0.20 8.00L2.73 5.82L2.48 2.48L5.82 2.73z"/><text x="8" y="10.5" font-size="6.3" text-anchor="middle" fill="#6e7a90" stroke="#6e7a90" stroke-width="0.3" font-family="Liberation Sans">24</text></g>
<g transform="translate(519,681)"><path d="M8.00 0.20L10.18 2.73L13.52 2.48L13.27 5.82L15.80 8.00L13.27 10.18L13.52 13.52L10.18 13.27L8.00 15.80L5.82 13.27L2.48 13.52L2.73 10.18L0.20 8.00L2.73 5.82L2.48 2.48L5.82 2.73z"/><text x="8" y="10.5" font-size="6.3" text-anchor="middle" fill="#6e7a90" stroke="#6e7a90" stroke-width="0.3" font-family="Liberation Sans">32</text></g>
<g transform="translate(543,681)"><path d="M3.5 5.5h9v6h-9zM3.5 7.5h-3l1.5 2-1.5 2.5h3M12.5 7.5h3l-1.5 2 1.5 2.5h-3"/></g>
<g transform="translate(567,681)"><path d="M3.5 4.5h9v6h-9zM3.5 6.5h-3l1.5 2-1.5 2.5h3M12.5 6.5h3l-1.5 2 1.5 2.5h-3M3.5 4.5v-1.5M12.5 4.5v-1.5"/></g>
<g transform="translate(591,681)"><path d="M3.5 6.5c3-2 6-2 9 0v5c-3-2-6-2-9 0zM3.5 8.5h-3l1.5 3-1 2.5 2.5-1M12.5 8.5h3l-1.5 3 1 2.5-2.5-1"/></g>
<g transform="translate(615,681)"><path d="M3.5 3.5c3 2 6 2 9 0v6c-3 2-6 2-9 0zM3.5 5h-3l1.5 3-1.5 3h3M12.5 5h3l-1.5 3 1.5 3h-3"/></g>
<g transform="translate(639,681)"><path d="M3.5 3.5v10a1.5 1.5 0 0 1 -3 0v-1h3M3.5 3.5a1.5 1.5 0 0 1 1.5-2h9a1.5 1.5 0 0 1 0 3h-2v10a1.5 1.5 0 0 1 -1.5 1.5h-9"/></g>
<g transform="translate(255,705)"><path d="M1.5 5.5v9a1.5 1.5 0 0 0 3 0v-1h10v-10h1a1.5 1.5 0 0 0 -3 0v1h-10zM1.5 5.5a1.5 1.5 0 0 1 3 0v9"/></g>
<g transform="translate(279,705)"><path d="M0.5 3.5c3-2 4-2 7.5 0s5 2 7.5 0v9c-3 2-4 2-7.5 0s-5-2-7.5 0z"/></g>
<g transform="translate(303,705)"><path d="M0.5 3.5c2-2 4-2 5 0s4 2 5 0 4-2 5 0v9c-2 2-4 2-5 0s-4-2-5 0-4 2-5 0z"/></g>
<g transform="translate(255,758)"><path d="M0.5 1.5h15v10h-9l-3 3.5v-3.5h-3z"/></g>
<g transform="translate(279,758)"><path d="M3.5 1.5h9a3 3 0 0 1 3 3v4a3 3 0 0 1 -3 3h-6l-3 3.5v-3.5a3 3 0 0 1 -3-3v-4a3 3 0 0 1 3-3z"/></g>
<g transform="translate(303,758)"><path d="M4 12.5c-5-2-4-11 4-11s9 9 2 10.5l-6 3.5z"/></g>
<g transform="translate(327,758)"><path d="M3 11.5c-4-1-3-6 0-6 0-4 6-5 7-2 3-1 6 2 4 5 1 3-3 5-5 3-2 1-4 1-5 0l-3 3z"/></g>
<g transform="translate(351,758)"><rect x="6.5" y="1.5" width="9" height="11"/><path d="M6.5 8l-6 7"/></g>
<g transform="translate(375,758)"><rect x="6.5" y="1.5" width="9" height="11"/><path d="M6.5 7.5h-3l-3 7"/></g>
<g transform="translate(399,758)"><rect x="6.5" y="1.5" width="9" height="11"/><path d="M6.5 5.5h-4v7l3 3"/></g>
<g transform="translate(423,758)"><rect x="7.5" y="1.5" width="8" height="11" fill="#b9c8e6" stroke="none"/><path d="M6.5 1v13M6.5 8l-6 7"/></g>
<g transform="translate(447,758)"><rect x="7.5" y="1.5" width="8" height="11" fill="#b9c8e6" stroke="none"/><path d="M6.5 1v13M6.5 7.5h-3l-3 7"/></g>
<g transform="translate(471,758)"><rect x="7.5" y="1.5" width="8" height="11" fill="#b9c8e6" stroke="none"/><path d="M6.5 1v13M6.5 5.5h-4v7l3 3"/></g>
<g transform="translate(495,758)"><rect x="6.5" y="1.5" width="9" height="11" fill="#b9c8e6"/><path d="M6.5 8l-6 7"/></g>
<g transform="translate(519,758)"><rect x="6.5" y="1.5" width="9" height="11" fill="#b9c8e6"/><path d="M6.5 7.5h-3l-3 7"/></g>
<g transform="translate(543,758)"><rect x="6.5" y="1.5" width="9" height="11" fill="#b9c8e6"/><path d="M6.5 5.5h-4v7l3 3"/></g>
<g transform="translate(567,758)"><rect x="8.5" y="1.5" width="7" height="11" fill="#dbe4f4"/><path d="M6.5 1v13M6.5 8l-6 7"/></g>
<g transform="translate(591,758)"><rect x="8.5" y="1.5" width="7" height="11" fill="#dbe4f4"/><path d="M6.5 1v13M6.5 7.5h-3l-3 7"/></g>
<g transform="translate(615,758)"><rect x="8.5" y="1.5" width="7" height="11" fill="#dbe4f4"/><path d="M6.5 1v13M6.5 5.5h-4v7l3 3"/></g>
</svg>
<!--/SHAPES-->
</body></html>
